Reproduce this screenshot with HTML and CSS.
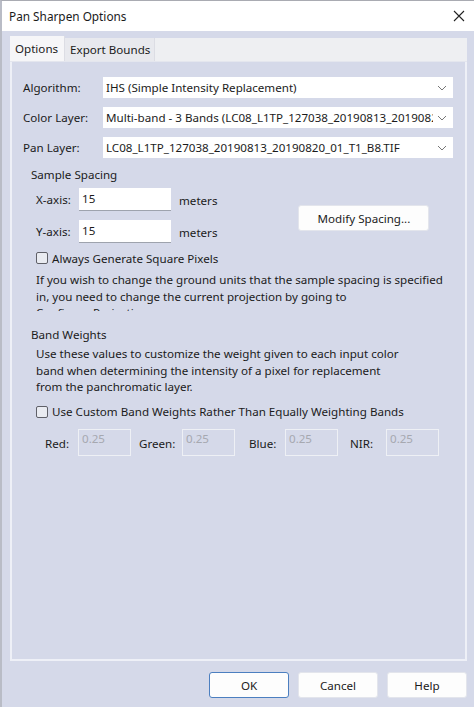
FILE: index.html
```html
<!DOCTYPE html>
<html>
<head>
<meta charset="utf-8">
<link rel="stylesheet" href="styles.css">
</head>
<body>
<div class="window">
  <div class="titlebar">
    <span class="title">Pan Sharpen Options</span>
    <svg class="close" width="12" height="12" viewBox="0 0 12 12"><path d="M1 1 L11 11 M11 1 L1 11" stroke="#222" stroke-width="1.1" fill="none"/></svg>
  </div>
  <div class="tabs-area">
    <div class="tabstrip">
      <div class="tab active">Options</div>
      <div class="tab">Export Bounds</div>
    </div>
    <div class="panel">
      <div class="form-row">
        <span class="row-label">Algorithm:</span>
        <div class="select"><span class="select-text">IHS (Simple Intensity Replacement)</span><svg class="chev" width="10" height="6" viewBox="0 0 10 6"><path d="M1 1 L5 5 L9 1" stroke="#777" stroke-width="1" fill="none"/></svg></div>
      </div>
      <div class="form-row">
        <span class="row-label">Color Layer:</span>
        <div class="select"><span class="select-text">Multi-band - 3 Bands (LC08_L1TP_127038_20190813_20190820_01_T1)</span><svg class="chev" width="10" height="6" viewBox="0 0 10 6"><path d="M1 1 L5 5 L9 1" stroke="#777" stroke-width="1" fill="none"/></svg></div>
      </div>
      <div class="form-row">
        <span class="row-label">Pan Layer:</span>
        <div class="select"><span class="select-text">LC08_L1TP_127038_20190813_20190820_01_T1_B8.TIF</span><svg class="chev" width="10" height="6" viewBox="0 0 10 6"><path d="M1 1 L5 5 L9 1" stroke="#777" stroke-width="1" fill="none"/></svg></div>
      </div>

      <div class="group spacing">
        <div class="group-title">Sample Spacing</div>
        <div class="spacing-body">
          <div class="axes">
            <div class="axis-row">
              <span class="axis-label">X-axis:</span>
              <div class="textbox">15</div>
              <span class="unit">meters</span>
            </div>
            <div class="axis-row">
              <span class="axis-label">Y-axis:</span>
              <div class="textbox">15</div>
              <span class="unit">meters</span>
            </div>
          </div>
          <div class="btn modify">Modify Spacing...</div>
        </div>
        <label class="check-row"><span class="checkbox"></span>Always Generate Square Pixels</label>
        <div class="note clipped">If you wish to change the ground units that the sample spacing is specified<br>in, you need to change the current projection by going to<br>Configure Projection...</div>
      </div>

      <div class="group weights">
        <div class="group-title">Band Weights</div>
        <div class="note">Use these values to customize the weight given to each input color<br>band when determining the intensity of a pixel for replacement<br>from the panchromatic layer.</div>
        <label class="check-row custom"><span class="checkbox"></span>Use Custom Band Weights Rather Than Equally Weighting Bands</label>
        <div class="weight-row">
          <span class="w-label red">Red:</span><div class="wbox">0.25</div>
          <span class="w-label green">Green:</span><div class="wbox">0.25</div>
          <span class="w-label blue">Blue:</span><div class="wbox">0.25</div>
          <span class="w-label nir">NIR:</span><div class="wbox">0.25</div>
        </div>
      </div>
    </div>
  </div>
  <div class="footer">
    <div class="btn fbtn default">OK</div>
    <div class="btn fbtn">Cancel</div>
    <div class="btn fbtn">Help</div>
  </div>
</div>
</body>
</html>
```
FILE: styles.css
```css
* { box-sizing: border-box; }
html, body { margin: 0; padding: 0; }
body {
  width: 474px;
  height: 707px;
  overflow: hidden;
  font-family: "Noto Sans", "Liberation Sans", sans-serif;
  font-size: 11.6px;
  color: #1b1b1b;
}
.window {
  width: 474px;
  height: 707px;
  background: #d5d9e9;
  display: flex;
  flex-direction: column;
  border-left: 2px solid #b9bcc6;
  border-top: 1px solid #a9abb2;
}
.titlebar {
  height: 30px;
  background: #ffffff;
  display: flex;
  align-items: center;
  justify-content: space-between;
  padding: 0 9px 0 7px;
  flex: none;
}
.title { font-size: 11.8px; color: #1a1a1a; }
.close { display: block; }
.tabs-area {
  padding: 7px 7px 0 8px;
  flex: none;
}
.tabstrip {
  height: 24px;
  background: #eeeff2;
  display: flex;
  align-items: stretch;
  border-bottom: 1px solid #e4e6ee;
}
.tab {
  padding: 0 4px 0 5px;
  display: flex;
  align-items: center;
  background: #e8e9ee;
  border-right: 1px solid #dcdde4;
}
.tab.active {
  background: #f6f6f8;
  padding: 0 6px 0 5px;
  margin-top: -2px;
}
.panel {
  height: 599px;
  border: 2px solid #eef0f7;
  border-top: none;
  padding: 15px 12px 0 11px;
  overflow: hidden;
}
.form-row {
  display: flex;
  align-items: center;
  height: 21px;
  margin-bottom: 9px;
}
.row-label { width: 80px; flex: none; }
.select {
  flex: 1;
  height: 21px;
  background: #ffffff;
  display: flex;
  align-items: center;
  padding: 0 6px 0 3px;
  overflow: hidden;
  min-width: 0;
}
.select-text { flex: 1; white-space: nowrap; overflow: hidden; }
.chev { flex: none; margin-left: 4px; }
.group { padding-left: 8px; }
.group-title { height: 16px; line-height: 16px; }
.spacing { margin-top: 1px; }
.spacing .group-title { margin-bottom: 5px; }
.spacing-body {
  display: flex;
  align-items: flex-start;
}
.axes { display: flex; flex-direction: column; gap: 9px; padding-left: 5px; }
.axis-row { display: flex; align-items: center; height: 23px; }
.axis-label { width: 43px; }
.textbox {
  width: 92px;
  height: 23px;
  background: #fff;
  border-bottom: 1px solid #9ea3ad;
  padding: 2px 3px 0;
  line-height: 18px;
}
.unit { margin-left: 8px; padding-top: 2px; }
.btn {
  background: #fdfdfd;
  border: 1px solid #e3e5ec;
  border-radius: 3px;
  display: flex;
  align-items: center;
  justify-content: center;
}
.modify {
  width: 131px;
  height: 26px;
  margin-left: 81px;
  margin-top: 17px;
}
.check-row {
  display: flex;
  align-items: center;
  height: 16px;
  margin-top: 7px;
  margin-left: 5px;
  gap: 4px;
}
.checkbox {
  width: 12px;
  height: 12px;
  border: 1px solid #5f6068;
  border-radius: 2px;
  background: #e9ebf1;
  flex: none;
}
.note {
  margin-left: 5px;
  line-height: 16.5px;
  white-space: nowrap;
}
.spacing .note { margin-top: 6px; }
.clipped { height: 39px; overflow: hidden; }
.weights { margin-top: 16px; }
.weights .group-title { margin-bottom: 3px; }
.custom { margin-top: 8px; }
.weight-row {
  display: flex;
  align-items: center;
  height: 27px;
  margin-top: 9px;
}
.w-label { padding-top: 2px; }
.red { margin-left: 14px; width: 33px; }
.green { margin-left: 8px; width: 43px; }
.blue { margin-left: 14px; width: 36px; }
.nir { margin-left: 12px; width: 36px; }
.wbox {
  width: 53px;
  height: 27px;
  border: 1px solid #eef0f5;
  color: #a6a8b0;
  padding: 1px 3px;
  line-height: 16px;
}
.footer {
  display: flex;
  justify-content: flex-end;
  gap: 9px;
  padding: 11px 7px 0 0;
}
.fbtn { width: 80px; height: 26px; }
.default { border: 1px solid #4c7fc0; }
```
